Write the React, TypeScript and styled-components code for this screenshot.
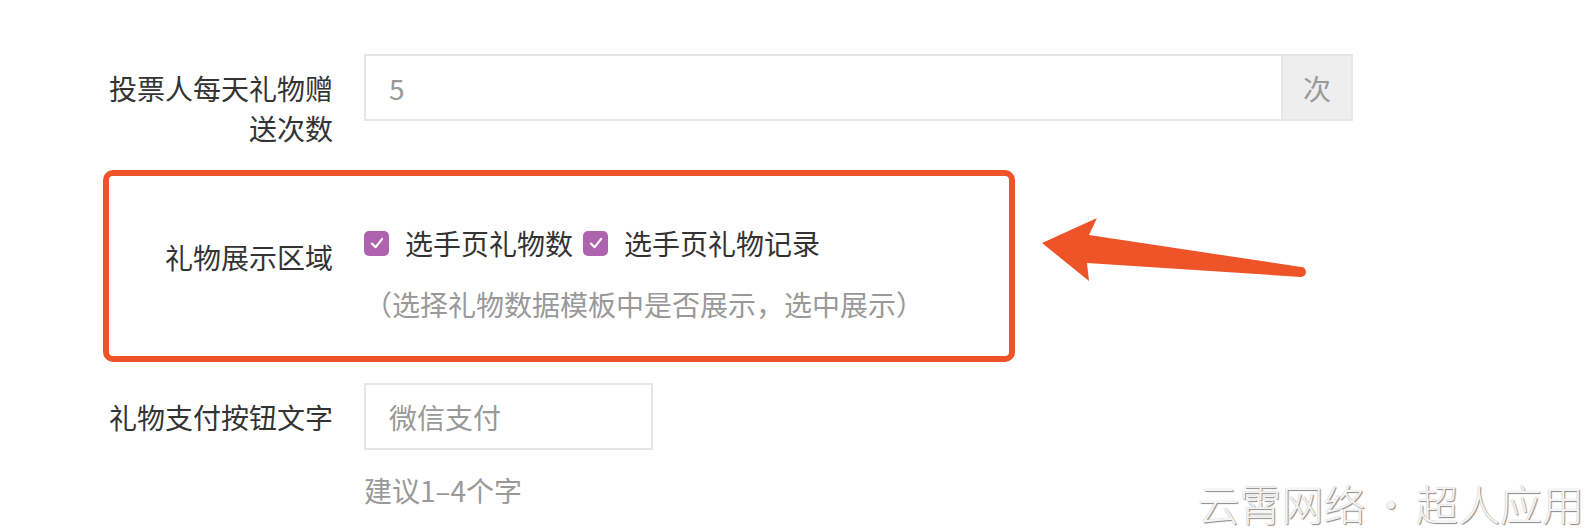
import React from 'react'
import styled, { createGlobalStyle } from 'styled-components'

const Global = createGlobalStyle`
body {
  margin: 0;
  background: #fff;
  font-family: "Noto Sans CJK SC", "Noto Sans", sans-serif;
}
`

const CheckBox: React.FC<{ label: string }> = ({ label }) => (
  <CheckItem>
    <Box>
      <svg width="18" height="18" viewBox="0 0 14 14">
        <polyline points="3,7.4 5.9,10.3 11,3.8" fill="none" stroke="#fff" strokeWidth="1.6" strokeLinecap="round" strokeLinejoin="round" />
      </svg>
    </Box>
    <CheckText>{label}</CheckText>
  </CheckItem>
)

export default function App() {
  return (
    <Page>
      <Global />
      <Form>
        <Row>
          <Label>投票人每天礼物赠送次数</Label>
          <Field>
            <InputGroup>
              <Input readOnly value="5" />
              <Addon>次</Addon>
            </InputGroup>
          </Field>
        </Row>

        <Highlight>
          <Row $labelWidth={224}>
            <Label>礼物展示区域</Label>
            <Field>
              <Checks>
                <CheckBox label="选手页礼物数" />
                <CheckBox label="选手页礼物记录" />
              </Checks>
              <Hint $top={21}>（选择礼物数据模板中是否展示，选中展示）</Hint>
            </Field>
          </Row>
        </Highlight>

        <Row $top={21}>
          <Label>礼物支付按钮文字</Label>
          <Field>
            <Input placeholder="微信支付" $width={289} />
            <Hint $top={20}>建议1–4个字</Hint>
          </Field>
        </Row>
      </Form>

      <Arrow width="280" height="80" viewBox="0 0 280 80">
        <path d="M7 33 L62 8 L54 25 L266 57 A5 5 0 0 1 266 67 L52 53 L54 71 Z" fill="#ee5427" />
      </Arrow>

      <Watermark>云霄网络 · 超人应用</Watermark>
    </Page>
  )
}

const Page = styled.div`
position: relative;
width: 1592px;
height: 532px;
overflow: hidden;
`
const Form = styled.div`
width: 1248px;
padding: 54px 0 0 105px;
`
const Row = styled.div<{ $labelWidth?: number; $top?: number }>`
display: grid;
grid-template-columns: ${p => p.$labelWidth ?? 228}px 1fr;
column-gap: 31px;
align-items: start;
margin-top: ${p => p.$top ?? 0}px;
`
const Label = styled.div`
padding-top: 14px;
font-size: 28px;
line-height: 40px;
color: #333;
text-align: right;
`
const Field = styled.div`
display: flex;
flex-direction: column;
align-items: flex-start;
`
const InputGroup = styled.div`
display: flex;
width: 100%;
`
const Input = styled.input<{ $width?: number }>`
box-sizing: border-box;
height: 67px;
width: ${p => (p.$width ? `${p.$width}px` : 'auto')};
flex: ${p => (p.$width ? 'none' : '1')};
border: 2px solid #e6e6e6;
padding: 0 0 0 23px;
font-family: inherit;
font-size: 28px;
color: #999;
outline: none;
&::placeholder {
  color: #999;
}
`
const Addon = styled.div`
box-sizing: border-box;
width: 70px;
height: 67px;
display: flex;
align-items: center;
justify-content: center;
background: #eee;
border: 2px solid #e6e6e6;
border-left: none;
font-size: 28px;
color: #999;
`
const Highlight = styled.div`
width: 900px;
margin: 22px 0 0 -2px;
padding: 47px 0 32px;
border: 6px solid #ee5427;
border-radius: 10px;
`
const Checks = styled.div`
display: flex;
align-items: center;
gap: 10px;
height: 40px;
`
const CheckItem = styled.label`
display: flex;
align-items: center;
gap: 16px;
`
const Box = styled.span`
flex: none;
width: 25px;
height: 25px;
border-radius: 5px;
background: #ad63ad;
display: flex;
align-items: center;
justify-content: center;
`
const CheckText = styled.span`
font-size: 28px;
line-height: 40px;
color: #333;
`
const Hint = styled.div<{ $top: number }>`
margin-top: ${p => p.$top}px;
font-size: 28px;
line-height: 40px;
color: #999;
`
const Arrow = styled.svg`
position: absolute;
left: 1035px;
top: 210px;
`
const Watermark = styled.div`
position: absolute;
right: 8px;
bottom: 8px;
font-size: 42px;
line-height: 42px;
font-weight: 300;
word-spacing: -5px;
color: #f4f4f4;
text-shadow: 1px 1px 1px #8a8a8a, 0 0 1px #bbb;
white-space: nowrap;
`
